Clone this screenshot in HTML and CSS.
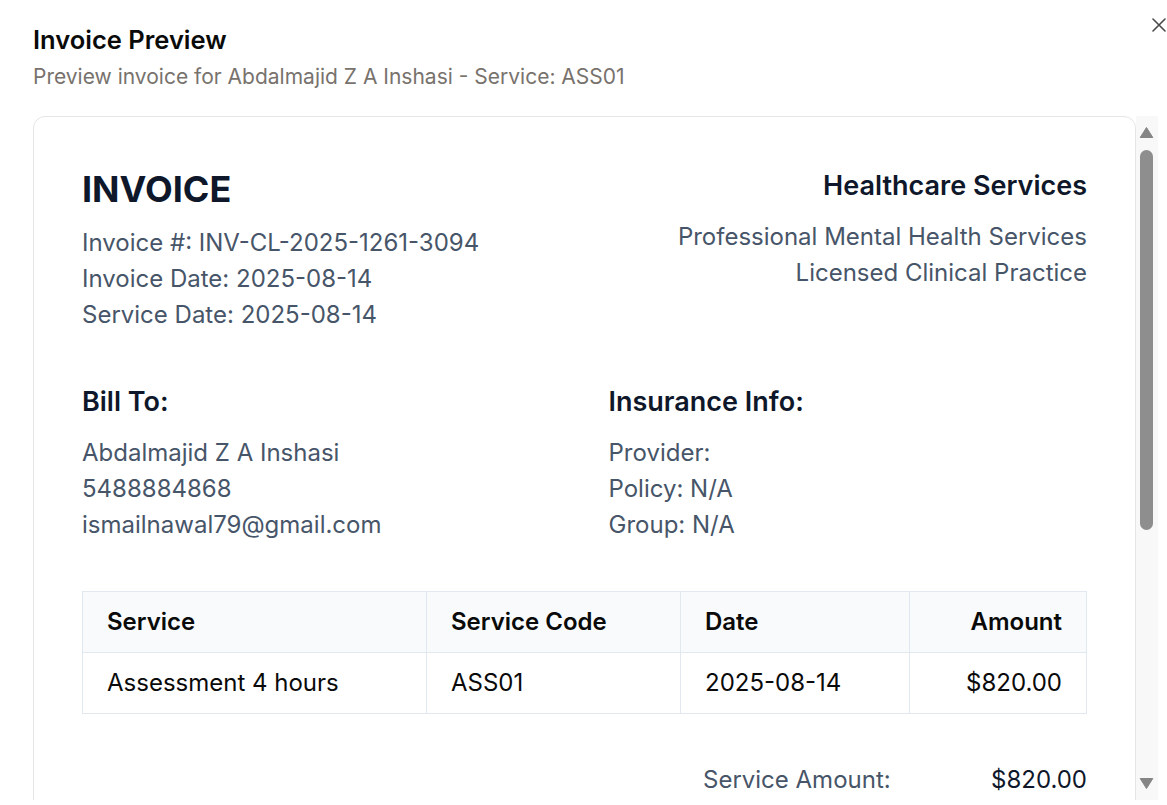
FILE: index.html
```html
<!DOCTYPE html>
<html lang="en">
<head>
<meta charset="utf-8">
<title>Invoice Preview</title>
<link rel="stylesheet" href="styles.css">
</head>
<body>
<div class="dialog">
  <button class="close" aria-label="Close">
    <svg width="14" height="14" viewBox="0 0 14 14"><path d="M1 1L13 13M13 1L1 13" stroke="#4a4a4a" stroke-width="1.6" fill="none" stroke-linecap="round"/></svg>
  </button>
  <header class="dialog-header">
    <h2 class="dialog-title">Invoice Preview</h2>
    <p class="dialog-desc">Preview invoice for Abdalmajid Z A Inshasi - Service: ASS01</p>
  </header>
  <div class="viewport">
    <div class="scroller">
      <div class="card">
        <div class="top">
          <div class="top-left">
            <h1 class="invoice-title">INVOICE</h1>
            <div class="lines">
              <p>Invoice #: INV-CL-2025-1261-3094</p>
              <p>Invoice Date: 2025-08-14</p>
              <p>Service Date: 2025-08-14</p>
            </div>
          </div>
          <div class="top-right">
            <h3 class="heading">Healthcare Services</h3>
            <div class="lines">
              <p>Professional Mental Health Services</p>
              <p>Licensed Clinical Practice</p>
            </div>
          </div>
        </div>
        <div class="parties">
          <div>
            <h3 class="heading">Bill To:</h3>
            <div class="lines">
              <p>Abdalmajid Z A Inshasi</p>
              <p>5488884868</p>
              <p>ismailnawal79@gmail.com</p>
            </div>
          </div>
          <div>
            <h3 class="heading">Insurance Info:</h3>
            <div class="lines">
              <p>Provider: </p>
              <p>Policy: N/A</p>
              <p>Group: N/A</p>
            </div>
          </div>
        </div>
        <table class="items">
          <colgroup>
            <col class="c1"><col class="c2"><col class="c3"><col class="c4">
          </colgroup>
          <thead>
            <tr><th>Service</th><th>Service Code</th><th>Date</th><th class="right">Amount</th></tr>
          </thead>
          <tbody>
            <tr><td>Assessment 4 hours</td><td>ASS01</td><td>2025-08-14</td><td class="right">$820.00</td></tr>
          </tbody>
        </table>
        <div class="totals-wrap">
          <div class="totals">
            <div class="total-row"><span class="label">Service Amount:</span><span class="value">$820.00</span></div>
          </div>
        </div>
      </div>
    </div>
    <div class="vscroll" aria-hidden="true">
      <div class="sb-btn">
        <svg width="22" height="30" viewBox="0 0 22 30"><path d="M10.5 11.5 L16.8 21.5 L4.2 21.5 Z" fill="#858585" stroke="#858585" stroke-width="1" stroke-linejoin="round"/></svg>
      </div>
      <div class="sb-track"><div class="sb-thumb"></div></div>
      <div class="sb-btn">
        <svg width="22" height="30" viewBox="0 0 22 30"><path d="M4.2 8.5 L16.8 8.5 L10.5 18.5 Z" fill="#858585" stroke="#858585" stroke-width="1" stroke-linejoin="round"/></svg>
      </div>
    </div>
  </div>
</div>
</body>
</html>
```
FILE: styles.css
```css
* { box-sizing: border-box; }
html, body { margin: 0; padding: 0; background: #ffffff; }
body {
  font-family: Inter, "Noto Sans", "Liberation Sans", sans-serif;
  color: #0f172a;
  overflow: hidden;
}
.dialog {
  position: relative;
  padding: 24px 0 0 33px;
  height: 805px;
}
.close {
  position: absolute;
  top: 18px;
  right: 1px;
  width: 14px;
  height: 14px;
  padding: 0;
  border: 0;
  background: transparent;
  display: flex;
}
.dialog-header { margin-bottom: 25px; }
.dialog-title {
  margin: 0;
  font-size: 25.5px;
  line-height: 32px;
  font-weight: 600;
  color: #0a0a0a;
}
.dialog-desc {
  margin: 7px 0 0;
  font-size: 21px;
  line-height: 28px;
  color: #78726d;
}
.viewport {
  display: flex;
  width: 1125px;
  height: 684px;
}
.scroller {
  flex: 0 0 1103px;
  overflow: hidden;
}
.vscroll {
  flex: 0 0 22px;
  display: flex;
  flex-direction: column;
  background: #f8f8f8;
}
.sb-btn { height: 30px; display: flex; }
.sb-track {
  flex: 1;
  padding: 4px 4px;
}
.sb-thumb {
  width: 13px;
  height: 380px;
  background: #8e8e8e;
  border-radius: 7px;
}
.card {
  border: 1px solid #e5e5e5;
  border-radius: 12px;
  padding: 48px;
  background: #fff;
  min-height: 1100px;
}
.top {
  display: flex;
  justify-content: space-between;
  margin-bottom: 48px;
}
.top-right { text-align: right; }
.invoice-title {
  margin: 0 0 12px;
  font-size: 36px;
  line-height: 48px;
  font-weight: 700;
  color: #0f172a;
}
.heading {
  margin: 0 0 12px;
  font-size: 27px;
  line-height: 42px;
  font-weight: 600;
  color: #0f172a;
}
.lines p {
  margin: 0;
  font-size: 24px;
  line-height: 36px;
  color: #475569;
}
.parties {
  display: grid;
  grid-template-columns: 1fr 1fr;
  column-gap: 48px;
  margin-bottom: 48px;
}
.items {
  width: 100%;
  table-layout: fixed;
  border-collapse: collapse;
  border: 1px solid #e2e8f0;
  font-size: 24px;
  line-height: 36px;
  color: #0a0a0a;
}
.c1 { width: 344px; }
.c2 { width: 254px; }
.c3 { width: 229px; }
.c4 { width: 177px; }
.items th, .items td {
  border: 1px solid #e2e8f0;
  padding: 12px 24px;
  text-align: left;
  white-space: nowrap;
}
.items th { background: #f8fafc; font-weight: 600; }
.items td { font-weight: 400; }
.items .right { text-align: right; }
.totals-wrap {
  display: flex;
  justify-content: flex-end;
  margin-top: 48px;
}
.totals { width: 384px; }
.total-row {
  display: flex;
  justify-content: space-between;
  font-size: 24px;
  line-height: 36px;
}
.total-row .label { color: #475569; }
.total-row .value { color: #0f172a; }
```
